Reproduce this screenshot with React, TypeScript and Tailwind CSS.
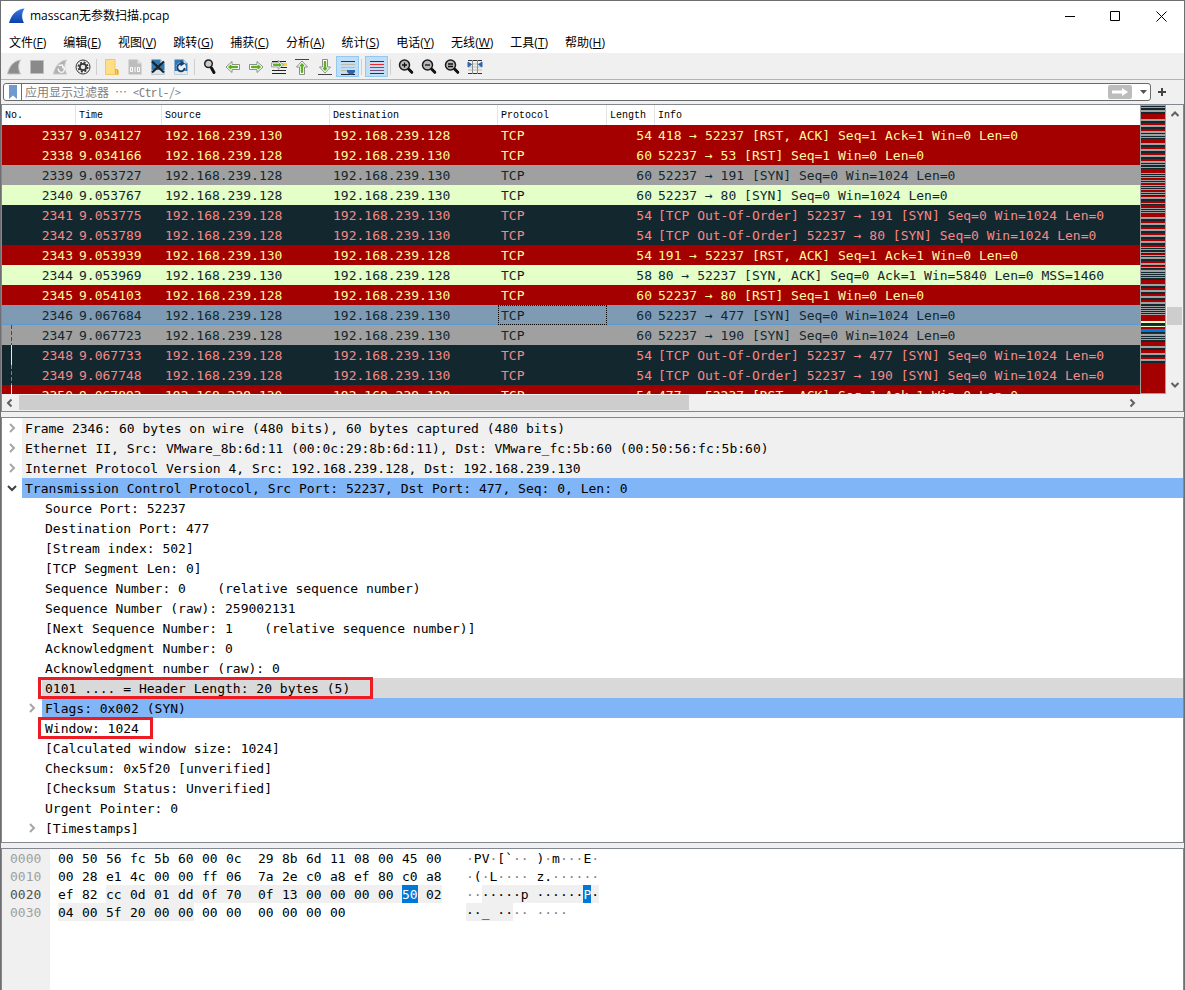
import { useState } from 'react';
import type { ReactNode } from 'react';

const mono = "font-['DejaVu_Sans_Mono','Noto_Sans_CJK_SC',monospace] text-[13px]";

const menus = [
  { label: '文件', key: 'F' },
  { label: '编辑', key: 'E' },
  { label: '视图', key: 'V' },
  { label: '跳转', key: 'G' },
  { label: '捕获', key: 'C' },
  { label: '分析', key: 'A' },
  { label: '统计', key: 'S' },
  { label: '电话', key: 'Y' },
  { label: '无线', key: 'W' },
  { label: '工具', key: 'T' },
  { label: '帮助', key: 'H' },
];

const rowStyles = {
  rst: 'bg-[#a40000] text-[#fffc9c]',
  syn: 'bg-[#a0a0a0] text-[#12272e]',
  http: 'bg-[#e4ffc7] text-[#12272e]',
  bad: 'bg-[#12272e] text-[#f78787]',
  selected: 'bg-[#7f9bb3] text-[#12272e] shadow-[inset_0_-1px_0_#5b9bd5,inset_0_1px_0_#6d9dc8]',
};

type Packet = {
  no: number;
  time: string;
  fromTarget?: boolean;
  len: number;
  info: string;
  kind: keyof typeof rowStyles;
  mark?: 'start' | 'dashed' | 'solid';
};

const packets: Packet[] = [
  { no: 2337, time: '9.034127', fromTarget: true, len: 54, info: '418 → 52237 [RST, ACK] Seq=1 Ack=1 Win=0 Len=0', kind: 'rst' },
  { no: 2338, time: '9.034166', len: 60, info: '52237 → 53 [RST] Seq=1 Win=0 Len=0', kind: 'rst' },
  { no: 2339, time: '9.053727', len: 60, info: '52237 → 191 [SYN] Seq=0 Win=1024 Len=0', kind: 'syn' },
  { no: 2340, time: '9.053767', len: 60, info: '52237 → 80 [SYN] Seq=0 Win=1024 Len=0', kind: 'http' },
  { no: 2341, time: '9.053775', len: 54, info: '[TCP Out-Of-Order] 52237 → 191 [SYN] Seq=0 Win=1024 Len=0', kind: 'bad' },
  { no: 2342, time: '9.053789', len: 54, info: '[TCP Out-Of-Order] 52237 → 80 [SYN] Seq=0 Win=1024 Len=0', kind: 'bad' },
  { no: 2343, time: '9.053939', fromTarget: true, len: 54, info: '191 → 52237 [RST, ACK] Seq=1 Ack=1 Win=0 Len=0', kind: 'rst' },
  { no: 2344, time: '9.053969', fromTarget: true, len: 58, info: '80 → 52237 [SYN, ACK] Seq=0 Ack=1 Win=5840 Len=0 MSS=1460', kind: 'http' },
  { no: 2345, time: '9.054103', len: 60, info: '52237 → 80 [RST] Seq=1 Win=0 Len=0', kind: 'rst' },
  { no: 2346, time: '9.067684', len: 60, info: '52237 → 477 [SYN] Seq=0 Win=1024 Len=0', kind: 'selected', mark: 'start' },
  { no: 2347, time: '9.067723', len: 60, info: '52237 → 190 [SYN] Seq=0 Win=1024 Len=0', kind: 'syn', mark: 'dashed' },
  { no: 2348, time: '9.067733', len: 54, info: '[TCP Out-Of-Order] 52237 → 477 [SYN] Seq=0 Win=1024 Len=0', kind: 'bad', mark: 'solid' },
  { no: 2349, time: '9.067748', len: 54, info: '[TCP Out-Of-Order] 52237 → 190 [SYN] Seq=0 Win=1024 Len=0', kind: 'bad', mark: 'dashed' },
  { no: 2350, time: '9.067893', fromTarget: true, len: 54, info: '477 → 52237 [RST, ACK] Seq=1 Ack=1 Win=0 Len=0', kind: 'rst', mark: 'solid' },
];

type TreeRow = { text: string; depth?: number; arrow?: 'open' | 'closed'; bg?: string; box?: string };

const tree: TreeRow[] = [
  { text: 'Frame 2346: 60 bytes on wire (480 bits), 60 bytes captured (480 bits)', arrow: 'closed', bg: 'bg-[#f0f0f0]' },
  { text: 'Ethernet II, Src: VMware_8b:6d:11 (00:0c:29:8b:6d:11), Dst: VMware_fc:5b:60 (00:50:56:fc:5b:60)', arrow: 'closed', bg: 'bg-[#f0f0f0]' },
  { text: 'Internet Protocol Version 4, Src: 192.168.239.128, Dst: 192.168.239.130', arrow: 'closed', bg: 'bg-[#f0f0f0]' },
  { text: 'Transmission Control Protocol, Src Port: 52237, Dst Port: 477, Seq: 0, Len: 0', arrow: 'open', bg: 'bg-[#80b5f8]' },
  { text: 'Source Port: 52237', depth: 1 },
  { text: 'Destination Port: 477', depth: 1 },
  { text: '[Stream index: 502]', depth: 1 },
  { text: '[TCP Segment Len: 0]', depth: 1 },
  { text: 'Sequence Number: 0    (relative sequence number)', depth: 1 },
  { text: 'Sequence Number (raw): 259002131', depth: 1 },
  { text: '[Next Sequence Number: 1    (relative sequence number)]', depth: 1 },
  { text: 'Acknowledgment Number: 0', depth: 1 },
  { text: 'Acknowledgment number (raw): 0', depth: 1 },
  { text: '0101 .... = Header Length: 20 bytes (5)', depth: 1, bg: 'bg-[#d9d9d9]', box: 'w-[335px]' },
  { text: 'Flags: 0x002 (SYN)', depth: 1, arrow: 'closed', bg: 'bg-[#80b5f8]' },
  { text: 'Window: 1024', depth: 1, box: 'w-[115px]' },
  { text: '[Calculated window size: 1024]', depth: 1 },
  { text: 'Checksum: 0x5f20 [unverified]', depth: 1 },
  { text: '[Checksum Status: Unverified]', depth: 1 },
  { text: 'Urgent Pointer: 0', depth: 1 },
  { text: '[Timestamps]', depth: 1, arrow: 'closed' },
];

// TCP header bytes are 34..53, the header length byte is 46
const hexRows = [
  '00 50 56 fc 5b 60 00 0c 29 8b 6d 11 08 00 45 00',
  '00 28 e1 4c 00 00 ff 06 7a 2e c0 a8 ef 80 c0 a8',
  'ef 82 cc 0d 01 dd 0f 70 0f 13 00 00 00 00 50 02',
  '04 00 5f 20 00 00 00 00 00 00 00 00',
];
const layerStart = 34;
const layerEnd = 53;
const pickedByte = 46;

// One letter per scan line of the packet overview strip
const strip = [
  'gdgddggddrrrrr', 'ggddrr', 'ggddrr', 'ggdggdgd', 'rrrr', 'ggddrr', 'ggddrr', 'ggddrr', 'ggdgddgd', 'rrrr',
  'gdgdgrrgdgrr', 'gdgdgrrgdgdr', 'ggddrr', 'gdrrr', 'gdgdgrrrr', 'ggddrr', 'ggddrr', 'ggddrr', 'ggddrr', 'ggddrr',
  'gdgddgdrgd', 'ggddrr', 'ggdrgdrg', 'gdgdgdgdd', 'rrrr', 'ggddrr', 'ggddrr', 'ggddrr', 'ggdd',
  'gdgdgdgdgr', 'rrrrr', 'eeddr', 'err', 'bbb', 'dr', 'ggdgdgdd', 'rrrr', 'ggddrrr', 'ggddrr', 'ggdd',
].join('');

const stripColors: Record<string, string> = {
  g: '#a0a0a0', d: '#12272e', r: '#a40000', e: '#e4ffc7', b: '#0078d7',
};

function Icon({ children }: { children: ReactNode }) {
  return (
    <svg className="w-4 h-4 shrink-0" viewBox="0 0 16 16" fill="none">
      {children}
    </svg>
  );
}

const arrowShape = 'M1 8l6-5.500v3h7.500v5H7v3z';
const finShape = 'M1.500 15C3 8 7 2 14.500 1C12 5 12 10 14.500 15z';

function Arrow({ transform }: { transform?: string }) {
  return (
    <g transform={transform}>
      <path d={arrowShape} fill="#fff" stroke="#8c8c8c" />
      <path d="M3.500 8l2.300-2v1.300h6.700v1.400H5.800V10z" fill="#4eae10" stroke="#4eae10" />
    </g>
  );
}

function Magnifier({ children }: { children?: ReactNode }) {
  return (
    <Icon>
      <circle cx="6.500" cy="6" r="5" fill="#b9b9b9" stroke="#1a1a1a" strokeWidth="1.500" />
      <path d="M10.800 10.300l3 3" stroke="#111" strokeWidth="3" strokeLinecap="round" />
      {children}
    </Icon>
  );
}

function Page({ fill, fold }: { fill: string; fold: string }) {
  return (
    <>
      <path d="M1.500 .5h9l4 4v11h-13z" fill={fill} />
      <path d="M10.500 .5v4h4z" fill={fold} />
    </>
  );
}

type Tool = { name: string; icon: ReactNode; active?: boolean };

const toolGroups: Tool[][] = [
  [
    { name: '开始捕获', icon: <Icon><path d={finShape} fill="#8c8c8c" stroke="#c4c4c4" /></Icon> },
    { name: '停止捕获', icon: <Icon><path d="M1.500 1.500h13v13h-13z" fill="#8a8a8a" stroke="#bdbdbd" /></Icon> },
    {
      name: '重新开始捕获',
      icon: (
        <Icon>
          <path d={finShape} fill="#b0b0b0" stroke="#c8c8c8" />
          <path d="M10.500 7.500A3 3 0 1 1 6.500 9.500M6.500 6.500l4-.5.5 3.500" stroke="#f6f6f6" strokeWidth="1.400" />
        </Icon>
      ),
    },
    {
      name: '捕获选项',
      icon: (
        <Icon>
          <circle cx="8" cy="8" r="7" fill="#f4f4f4" stroke="#333" />
          <circle cx="8" cy="8" r="4" fill="#333" />
          <circle cx="8" cy="8" r="4.700" stroke="#333" strokeWidth="1.600" strokeDasharray="2 1.700" />
          <circle cx="8" cy="8" r="2.300" fill="#e8e8e8" />
        </Icon>
      ),
    },
  ],
  [
    {
      name: '打开',
      icon: (
        <Icon>
          <path d="M1.500 .5h9.500v11h3.500v4h-13z" fill="#ffdf86" stroke="#f0c860" />
          <path d="M11.500 15v-4.500h2V15" fill="#fbd064" stroke="#dfa93c" />
        </Icon>
      ),
    },
    {
      name: '保存',
      icon: (
        <Icon>
          <Page fill="#bdbdbd" fold="#e2e2e2" />
          <path d="M3.500 8.500h2v4h-2zM10.500 8.500h2v4h-2zM8 8v5" stroke="#fff" />
        </Icon>
      ),
    },
    {
      name: '关闭',
      icon: (
        <Icon>
          <Page fill="#2f78b4" fold="#c9dcea" />
          <path d="M1.500 11h13v4.500h-13z" fill="#dfe6e2" />
          <path d="M2 2.500l12 11M14 2.500l-12 11" stroke="#1b2226" strokeWidth="2.200" />
        </Icon>
      ),
    },
    {
      name: '重新加载',
      icon: (
        <Icon>
          <Page fill="#2f78b4" fold="#c9dcea" />
          <path d="M1.500 12h13v3.500h-13z" fill="#e6ebe6" />
          <circle cx="8" cy="8.500" r="5" fill="#eef2f2" />
          <path d="M9 4.800A3.800 3.800 0 1 0 11.800 9" stroke="#163f73" strokeWidth="2" />
          <path d="M7.500 1.500v6l4.500-3z" fill="#163f73" />
        </Icon>
      ),
    },
  ],
  [
    {
      name: '查找',
      icon: (
        <Icon>
          <circle cx="6.500" cy="4.800" r="3.800" fill="#c9cdd0" stroke="#222" strokeWidth="1.500" />
          <path d="M9.500 9l2.500 4.500" stroke="#111" strokeWidth="3" strokeLinecap="round" />
        </Icon>
      ),
    },
    { name: '上一个', icon: <Icon><Arrow /></Icon> },
    { name: '下一个', icon: <Icon><Arrow transform="rotate(180 8 8)" /></Icon> },
    {
      name: '转到分组',
      icon: (
        <Icon>
          <path d="M1 2.500h14M1 11.500h14M1 14.500h14" stroke="#222" />
          <path d="M11 4h5v3h-5z" fill="#f3d23c" />
          <path d="M9 8.500h7" stroke="#222" />
          <g transform="translate(13.500 -.5) scale(-.9 .8)">
            <Arrow />
          </g>
        </Icon>
      ),
    },
    { name: '首个分组', icon: <Icon><path d="M1 .5h14" stroke="#444" /><Arrow transform="rotate(90 8 8) translate(1)" /></Icon> },
    { name: '最新分组', icon: <Icon><path d="M1 15.500h14" stroke="#444" /><Arrow transform="rotate(-90 8 8) translate(1)" /></Icon> },
    {
      name: '自动滚动',
      active: true,
      icon: (
        <Icon>
          <path d="M1 2.500h14" stroke="#333" />
          <path d="M1 5.500h14M1 8.500h14M1 11.500h14" stroke="#b8bdb4" />
          <path d="M1 15.500h14" stroke="#222" />
          <path d="M7 11h8v2l-2.500 2.500h-3L7 13z" fill="#2c64ad" />
        </Icon>
      ),
    },
  ],
  [
    {
      name: '着色',
      active: true,
      icon: (
        <Icon>
          <path d="M1 2.500h14" stroke="#333" />
          <path d="M1 5.500h14" stroke="#ef2929" />
          <path d="M1 8.500h14" stroke="#3465a4" />
          <path d="M1 11.500h14" stroke="#75507b" />
          <path d="M1 14.500h14" stroke="#333" />
        </Icon>
      ),
    },
  ],
  [
    { name: '放大', icon: <Magnifier><path d="M4 6h5M6.500 3.500v5" stroke="#111" strokeWidth="1.300" /></Magnifier> },
    { name: '缩小', icon: <Magnifier><path d="M4 6h5" stroke="#111" strokeWidth="1.300" /></Magnifier> },
    { name: '正常大小', icon: <Magnifier><path d="M4 5h5M4 7.500h5" stroke="#111" strokeWidth="1.300" /></Magnifier> },
    {
      name: '调整列宽',
      icon: (
        <Icon>
          <path d="M1 1.500h14M1 14.500h14" stroke="#333" />
          <path d="M1 5h14M1 8h14M1 11h14" stroke="#b8bdb4" />
          <path d="M5.500 1v14M10.500 1v14" stroke="#8b8f88" />
          <path d="M1 3l3.500 2.500L1 8zM15 3l-3.500 2.500L15 8z" fill="#2c64ad" stroke="#2c64ad" />
        </Icon>
      ),
    },
  ],
];

function Chevron({ d, className = '' }: { d: string; className?: string }) {
  return (
    <svg className={`w-[10px] h-[10px] ${className}`} viewBox="0 0 10 10" fill="none" stroke="currentColor" strokeWidth={2}>
      <path d={d} />
    </svg>
  );
}

function TitleBar() {
  return (
    <header className="flex items-center h-[30px] pl-2 bg-white">
      <svg className="w-4 h-4" viewBox="0 0 16 16">
        <defs>
          <linearGradient id="fin" x1="0" y1="0" x2="0" y2="1">
            <stop offset="0" stopColor="#3a78e0" />
            <stop offset="1" stopColor="#0b3fa8" />
          </linearGradient>
        </defs>
        <path d="M0 15C2 8 6 1.500 15.500 .5C12.500 5 12.500 10 15 15z" fill="url(#fin)" />
      </svg>
      <h1 className="ml-[5px] text-[12px]">masscan无参数扫描.pcap</h1>
      <div className="ml-auto flex text-black">
        <button aria-label="最小化" className="w-[46px] h-[30px] flex items-center justify-center">
          <svg className="w-[11px] h-[11px]" viewBox="0 0 11 11" stroke="currentColor"><path d="M0 5.500h10" /></svg>
        </button>
        <button aria-label="最大化" className="w-[45px] h-[30px] flex items-center justify-center">
          <svg className="w-[11px] h-[11px]" viewBox="0 0 11 11" stroke="currentColor" fill="none"><path d="M.5 .5h9v9h-9z" /></svg>
        </button>
        <button aria-label="关闭" className="w-[46px] h-[30px] flex items-center justify-center">
          <svg className="w-[11px] h-[11px]" viewBox="0 0 11 11" stroke="currentColor"><path d="M.5 .5l10 10M10.500 .5l-10 10" /></svg>
        </button>
      </div>
    </header>
  );
}

function Toolbar() {
  return (
    <div role="toolbar" className="flex items-center h-[26px] pl-px border-b border-[#b4b4b4] bg-[#f0f0f0]">
      {toolGroups.map((group, i) => (
        <div key={i} className="flex items-center">
          {i > 0 && <span className="w-px h-4 mr-[3px] ml-[2px] bg-[#cfcfcf]" />}
          {group.map((tool) => (
            <button
              key={tool.name}
              aria-label={tool.name}
              className={`w-[23px] h-[21px] flex items-center justify-center border ${
                tool.active ? 'bg-[#c2def5] border-[#90c8f6]' : 'border-transparent'
              }`}
            >
              {tool.icon}
            </button>
          ))}
        </div>
      ))}
    </div>
  );
}

function FilterBar() {
  const [filter, setFilter] = useState('');
  return (
    <div className="flex items-center h-6 pl-[2px] bg-[#f0f0f0]">
      <div className="flex items-center flex-1 h-[18px] border border-[#6b6b6b] rounded-[3px] bg-white">
        <button aria-label="书签" className="flex items-center justify-center w-[18px] h-4 border-r border-[#6b6b6b]">
          <svg className="w-2 h-[14px]" viewBox="0 0 8 14"><path d="M0 0h8v14L4 10.500 0 14z" fill="#6d9bd1" /></svg>
        </button>
        <input
          aria-label="显示过滤器"
          value={filter}
          onChange={(e) => setFilter(e.target.value)}
          placeholder="应用显示过滤器 ⋯ <Ctrl-/>"
          className="flex-1 h-4 pl-[3px] text-[12px] font-['Noto_Sans_Mono_CJK_SC','Noto_Sans_CJK_SC',monospace] outline-none placeholder:text-[#808080]"
        />
        <button aria-label="应用" className="flex items-center justify-center w-6 h-[14px] rounded-[2px] bg-[#bdbdbd]">
          <svg className="w-4 h-2" viewBox="0 0 16 8"><path d="M0 2.500h10V0l6 4-6 4V5.500H0z" fill="#fff" /></svg>
        </button>
        <button aria-label="历史" className="flex items-center justify-center w-[18px] h-4 pl-1">
          <svg className="w-[7px] h-1" viewBox="0 0 7 4"><path d="M0 0h7L3.500 4z" fill="#555" /></svg>
        </button>
      </div>
      <button aria-label="添加" className="flex items-center justify-center w-[21px] h-5 mr-3">
        <svg className="w-2 h-2" viewBox="0 0 8 8" stroke="#444" strokeWidth={2}><path d="M0 4h8M4 0v8" /></svg>
      </button>
    </div>
  );
}

function Mark({ type }: { type: Packet['mark'] }) {
  if (!type) return null;
  return (
    <svg className="w-5 h-5 shrink-0" viewBox="0 0 20 20" fill="none">
      {type === 'start' && (
        <>
          <path d="M18 10.500H9.500V15" stroke="#8f969b" />
          <path d="M9.500 17v3" stroke="#8f969b" />
        </>
      )}
      {type === 'dashed' && <path d="M9.500 0v20" stroke="currentColor" strokeDasharray="4 2" opacity=".7" />}
      {type === 'solid' && <path d="M9.500 0v20" stroke="#ffe0d8" />}
    </svg>
  );
}

function PacketList() {
  const th = 'p-0 pl-[3px] font-normal text-left border-r border-[#e5e5e5]';
  const td = 'p-0 pl-[3px] pt-[2px]';
  return (
    <section className="border border-[#828790] bg-white">
      <div className="flex h-[289px]">
        <div className="flex-1 min-w-0 overflow-hidden">
          <table className={`w-full table-fixed border-separate border-spacing-0 whitespace-pre ${mono}`}>
            <colgroup>
              <col className="w-[74px]" />
              <col className="w-[86px]" />
              <col className="w-[168px]" />
              <col className="w-[168px]" />
              <col className="w-[109px]" />
              <col className="w-[48px]" />
              <col />
            </colgroup>
            <thead className="font-['Liberation_Mono',monospace] text-[10px] text-black">
              <tr className="h-5">
                <th className={th}>No.</th>
                <th className={th}>Time</th>
                <th className={th}>Source</th>
                <th className={th}>Destination</th>
                <th className={th}>Protocol</th>
                <th className={th}>Length</th>
                <th className="p-0 pl-[3px] font-normal text-left">Info</th>
              </tr>
            </thead>
            <tbody className="leading-[18px]">
              {packets.map((p) => (
                <tr key={p.no} className={`h-5 ${rowStyles[p.kind]}`}>
                  <td className="p-0 pr-[3px]">
                    <div className="flex h-5">
                      <Mark type={p.mark} />
                      <span className="ml-auto pt-[2px]">{p.no}</span>
                    </div>
                  </td>
                  <td className={td}>{p.time}</td>
                  <td className={td}>{p.fromTarget ? '192.168.239.130' : '192.168.239.128'}</td>
                  <td className={td}>{p.fromTarget ? '192.168.239.128' : '192.168.239.130'}</td>
                  <td className={`${td} ${p.kind === 'selected' ? 'outline-1 outline-dotted outline-black -outline-offset-1' : ''}`}>TCP</td>
                  <td className="p-0 pr-[3px] pt-[2px] text-right">{p.len}</td>
                  <td className={td}>{p.info}</td>
                </tr>
              ))}
            </tbody>
          </table>
        </div>
        <svg className="w-[26px] h-full border-x border-b border-[#a0a0a0] bg-[#a40000]" viewBox="0 0 24 288" preserveAspectRatio="none">
          {strip.split('').map((c, y) => (
            <rect key={y} x="0" y={y} width="24" height="1" fill={stripColors[c]} />
          ))}
        </svg>
        <div className="flex flex-col items-center w-[17px] py-1 bg-[#f0f0f0] text-[#606060]">
          <Chevron d="M1.500 7L5 3.500 8.500 7" />
          <div className="flex-1" />
          <div className="w-[15px] h-[18px] bg-[#cdcdcd]" />
          <div className="h-[55px]" />
          <Chevron d="M1.500 3L5 6.500 8.500 3" />
        </div>
      </div>
      <div className="flex items-center h-[17px] bg-[#f0f0f0] text-[#606060]">
        <Chevron d="M6.500 1.500L3 5 6.500 8.500" className="ml-[3px] mr-1" />
        <div className="w-[670px] h-[15px] bg-[#cdcdcd]" />
        <Chevron d="M3.500 1.500L7 5 3.500 8.500" className="ml-auto mr-[46px]" />
      </div>
    </section>
  );
}

function PacketTree() {
  return (
    <section className={`border border-[#828790] bg-white text-black ${mono}`}>
      <ul className="pb-1 leading-[22px] whitespace-pre">
        {tree.map((row) => (
          <li key={row.text} className={`relative flex h-5 ${row.depth ? 'pl-5' : ''}`}>
            <span className="flex items-center justify-center w-5 pr-px shrink-0">
              {row.arrow && (
                <button aria-label={row.arrow === 'open' ? '折叠' : '展开'}>
                  {row.arrow === 'open' ? (
                    <Chevron d="M1 3l4 4 4-4" className="text-[#404040]" />
                  ) : (
                    <Chevron d="M3 1l4 4-4 4" className="text-[#a6a6a6]" />
                  )}
                </button>
              )}
            </span>
            <span className={`flex-1 pl-[3px] ${row.bg ?? ''}`}>{row.text}</span>
            {row.box && <span className={`absolute -top-px left-9 h-[22px] border-[3px] border-[#ed1c24] z-10 ${row.box}`} />}
          </li>
        ))}
      </ul>
    </section>
  );
}

function HexRow({ bytes, offset }: { bytes: string[]; offset: number }) {
  const inLayer = (i: number) => i >= layerStart && i <= layerEnd;
  return (
    <div className="flex h-[18px]">
      {bytes.map((byte, col) => {
        const i = offset + col;
        const joined = inLayer(i) && inLayer(i + 1) && col < 15;
        const width = col === 15 ? 'w-4' : col === 7 ? 'w-8' : 'w-6';
        const bg = i === pickedByte ? 'bg-[#0078d7] text-white' : inLayer(i) ? 'bg-[#f0f0f0]' : '';
        return (
          <span key={col} className={`flex ${width} ${joined ? 'bg-[#f0f0f0]' : ''}`}>
            <span className={`w-4 ${bg}`}>{byte}</span>
          </span>
        );
      })}
    </div>
  );
}

function HexDump() {
  const hl = 'bg-[#f0f0f0]';
  const pick = 'bg-[#0078d7] text-white';
  const dim = 'text-[#808080]';
  return (
    <section className={`flex flex-1 border border-b-0 border-[#828790] bg-white text-black leading-[20px] whitespace-pre ${mono}`}>
      <div className="w-12 pl-2 bg-[#f0f0f0] text-[#a0a0a0]">
        <div className="h-[18px]">0000</div>
        <div className="h-[18px]">0010</div>
        <div className="h-[18px] text-[#505050]">0020</div>
        <div className="h-[18px]">0030</div>
      </div>
      <div className="w-[384px] ml-2">
        {hexRows.map((row, i) => (
          <HexRow key={i} bytes={row.split(' ')} offset={i * 16} />
        ))}
      </div>
      <div className="ml-6">
        <div className="flex h-[18px]">
          <span className={dim}>·</span>PV<span className={dim}>·</span>[`<span className={dim}>··</span>
          <span> )</span><span className={dim}>·</span>m<span className={dim}>···</span>E<span className={dim}>·</span>
        </div>
        <div className="flex h-[18px]">
          <span className={dim}>·</span>(<span className={dim}>·</span>L<span className={dim}>····</span>
          <span> z.</span><span className={dim}>······</span>
        </div>
        <div className="flex h-[18px]">
          <span className={dim}>··</span>
          <span className={hl}>·····p ······</span>
          <span className={pick}>P</span>
          <span className={hl}>·</span>
        </div>
        <div className="flex h-[18px]">
          <span className={hl}>··_ ··</span>
          <span className={dim}>·· ····</span>
        </div>
      </div>
    </section>
  );
}

export default function App() {
  return (
    <div className="min-h-screen flex flex-col border-t border-x border-[#6e6e73] bg-[#f0f0f0] font-['Open_Sans','Noto_Sans_CJK_SC',sans-serif] text-black">
      <TitleBar />
      <nav className="flex items-center h-[23px] pl-2 pt-[2px] gap-[17px] bg-white border-b border-[#f0f0f0] text-[12px]">
        {menus.map((m) => (
          <button key={m.key}>
            {m.label}(<u>{m.key}</u>)
          </button>
        ))}
      </nav>
      <Toolbar />
      <FilterBar />
      <main className="flex flex-col flex-1 gap-[5px]">
        <PacketList />
        <PacketTree />
        <HexDump />
      </main>
    </div>
  );
}
